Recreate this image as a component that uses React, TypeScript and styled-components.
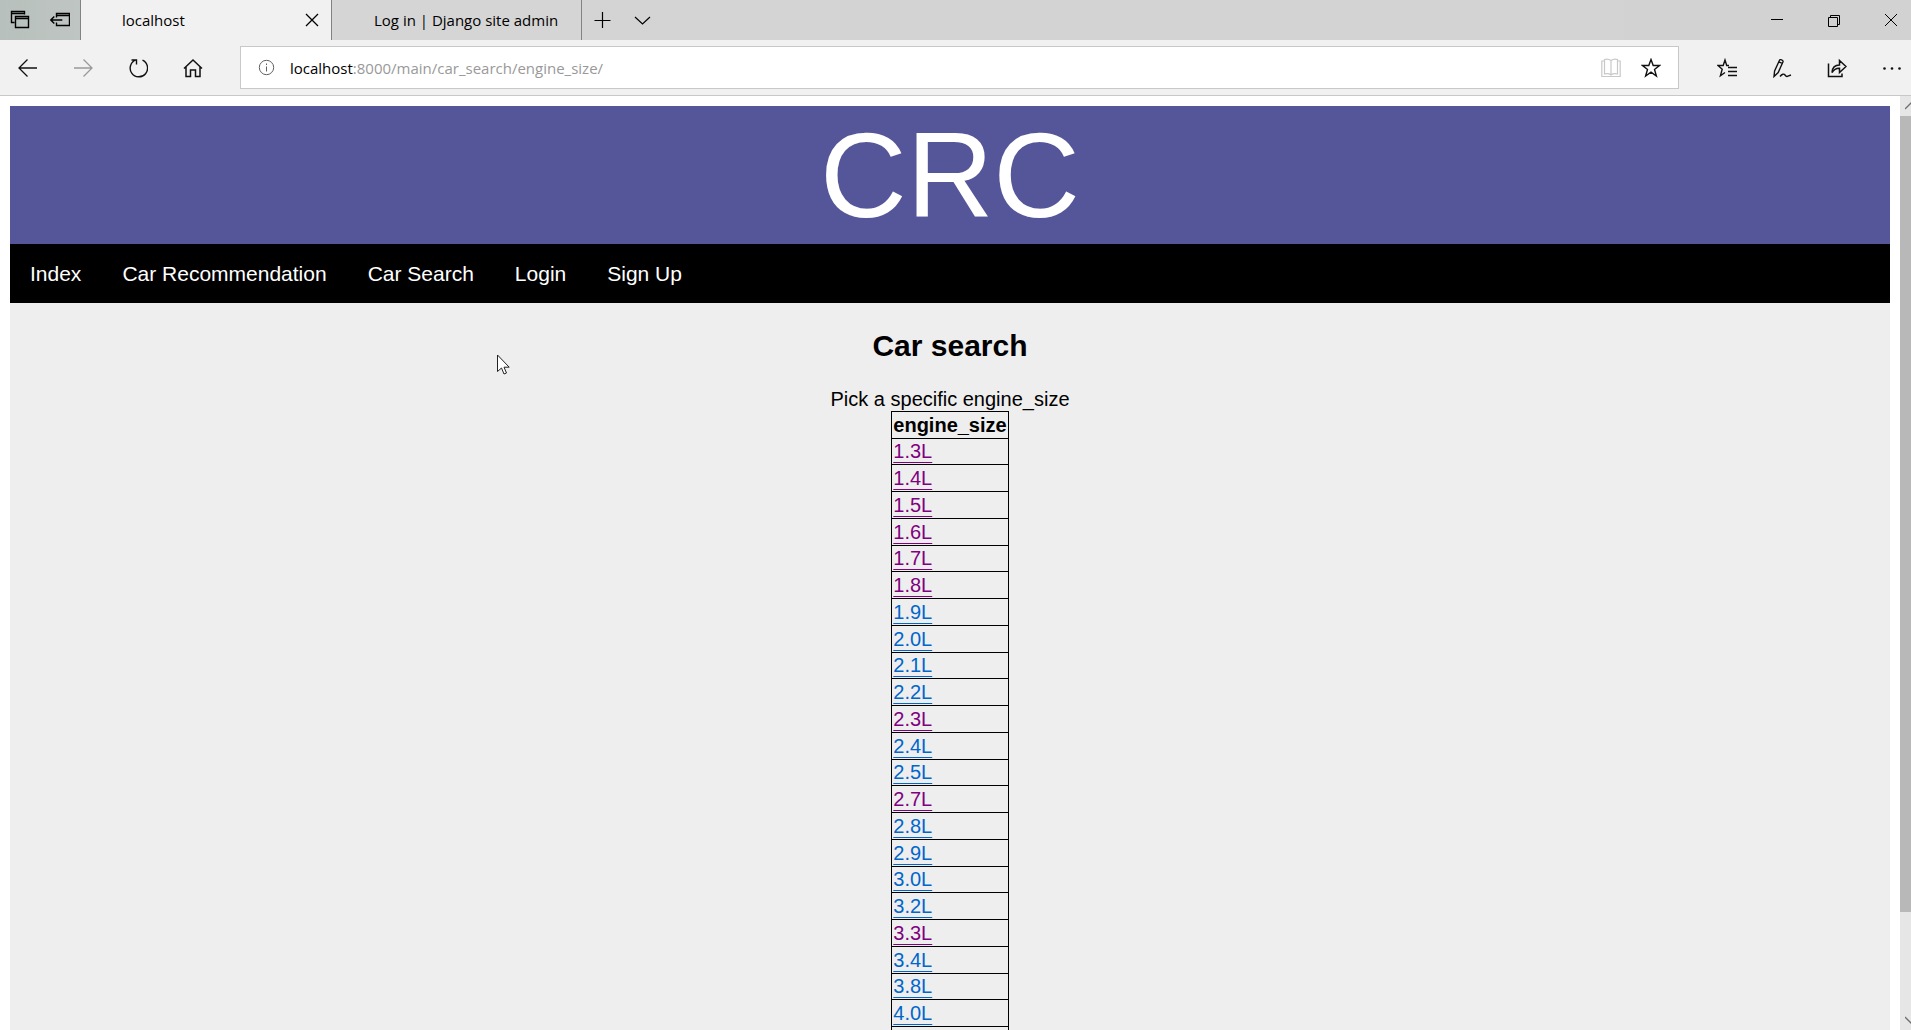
import React from "react";
import styled, { createGlobalStyle } from "styled-components";

const GlobalStyle = createGlobalStyle`
  *, *::before, *::after { box-sizing: border-box; }
  body { margin: 0; background: #fff; overflow: hidden; }
  button { border: 0; padding: 0; background: none; color: inherit; font: inherit; }
`;

const uiFont = `"Open Sans", "Noto Sans", sans-serif`;

const Browser = styled.div`
  display: flex;
  flex-direction: column;
  height: 100vh;
  overflow: hidden;
`;

const TabStrip = styled.header`
  display: flex;
  flex: none;
  height: 40px;
  background: linear-gradient(90deg, #b7c0bc 0, #bfc5c2 80px, #d4d4d4 340px, #d2d2d2 100%);
  color: #000;
  font: 15px/20px ${uiFont};
`;

const StripButton = styled.button`
  flex: none;
  display: grid;
  place-items: center;
  width: 40px;
  height: 40px;
`;

const Tab = styled.div<{ $active?: boolean }>`
  display: flex;
  align-items: center;
  flex: none;
  width: ${(p) => (p.$active ? 252 : 250)}px;
  padding-left: ${(p) => (p.$active ? 41 : 42)}px;
  padding-right: ${(p) => (p.$active ? 7 : 0)}px;
  background: ${(p) => (p.$active ? "#f1f1f1" : "#d5d5d5")};
  border: solid #828282;
  border-width: 0 1px 0 ${(p) => (p.$active ? 1 : 0)}px;
`;

const TabTitle = styled.button`
  flex: 1;
  text-align: left;
  white-space: nowrap;
`;

const TabClose = styled.button`
  display: grid;
  place-items: center;
  width: 24px;
  height: 24px;
`;

const WindowControls = styled.div`
  display: flex;
  margin-left: auto;
  margin-right: -8px;
`;

const WindowButton = styled(StripButton)`
  width: 57px;
`;

const Toolbar = styled.div`
  display: flex;
  align-items: center;
  flex: none;
  height: 56px;
  background: #f1f1f1;
  border-bottom: 1px solid #c8c8c8;
`;

const ToolGroup = styled.div<{ $end?: boolean }>`
  display: flex;
  flex: none;
  margin-right: ${(p) => (p.$end ? -8 : 0)}px;
`;

const ToolButton = styled.button<{ $muted?: boolean }>`
  display: grid;
  place-items: center;
  width: 55px;
  height: 54px;
  color: ${(p) => (p.$muted ? "#999" : "#111")};
`;

const AddressBar = styled.div`
  display: flex;
  align-items: center;
  flex: 1;
  height: 43px;
  margin: 0 20px;
  padding: 0 7px 0 16px;
  background: #fff;
  border: 1px solid #c8c8c8;
  font: 15px/20px ${uiFont};
`;

const InfoButton = styled.button`
  display: grid;
  width: 20px;
  margin-right: 13px;
  color: #606060;
`;

const Host = styled.label`
  color: #000;
`;

const AddressInput = styled.input`
  flex: 1;
  min-width: 0;
  padding: 0;
  border: 0;
  outline: 0;
  background: none;
  color: #999;
  font: inherit;
`;

const AddressButton = styled.button<{ $muted?: boolean }>`
  display: grid;
  place-items: center;
  width: 40px;
  height: 40px;
  color: ${(p) => (p.$muted ? "#c8c8c8" : "#111")};
`;

const Viewport = styled.div`
  display: flex;
  flex: 1;
  min-height: 0;
`;

const Page = styled.div`
  flex: 1;
  min-width: 0;
  padding: 10px;
  overflow: hidden;
  font: 20px/23px "Liberation Sans", Arial, sans-serif;
  color: #000;
`;

const Banner = styled.div`
  background: #555599;
  color: #fff;
  font-size: 120px;
  line-height: 138px;
  text-align: center;
`;

const Nav = styled.nav`
  display: flex;
  gap: 1px;
  background: #000;
`;

const NavLink = styled.a`
  padding: 18px 20px;
  color: #fff;
  font-size: 21px;
  text-decoration: none;
`;

const Main = styled.main`
  padding-top: 25px;
  background: #eee;
  text-align: center;
`;

const Title = styled.h2`
  margin: 0 0 25px;
  font-size: 30px;
  line-height: 35px;
`;

const Intro = styled.p`
  margin: 0;
`;

const Table = styled.table`
  margin: 0 auto;
  border-collapse: collapse;
  line-height: 23px;
  text-align: left;

  th, td {
    padding: 1px;
    border: 1px solid #000;
  }
  tr { height: 27px; }
  tbody tr:nth-child(4n + 1) { height: 26px; }
`;

const SizeLink = styled.a<{ $visited: boolean }>`
  color: ${(p) => (p.$visited ? "#800080" : "#0066cc")};
  text-decoration: underline 1px;
  text-underline-offset: 4px;
  text-decoration-skip-ink: none;
`;

const ScrollBar = styled.div`
  display: flex;
  flex-direction: column;
  flex: none;
  width: 11px;
  overflow: hidden;
  background: #e6e6e6;
  color: #707070;
`;

const ScrollButton = styled.button`
  display: grid;
  place-items: center;
  flex: none;
  width: 22px;
  height: 20px;
`;

const ScrollTrack = styled.div`
  flex: 1;
`;

const ScrollThumb = styled.div`
  height: 89%;
  background: #b8b8b8;
`;

const Pointer = styled.svg`
  position: absolute;
  left: 497px;
  top: 354px;
  pointer-events: none;
`;

const paths = {
  tabs: "M4.5 12.5h-3v-11h13v3 M1.5 3.5h13 M5.5 6.5h13v11h-13z M5.5 8.5h13",
  setAside: "M6.5 7.5v-4h13v12h-13v-3 M6.5 5.5h13 M.8 10h11.5 M4.3 6.5 .8 10l3.5 3.5",
  close: "m4 4 12 12 M16 4 4 16",
  plus: "M10.5 2v16 M2.5 10.5h16",
  down: "m3 7 7.5 7 7.5-7",
  minimize: "M4 9.5h12",
  restore: "M4.5 7.5h9v9h-9z M6.5 7.5v-2h9v9h-2",
  back: "M19 10H1 M9.5 1.5 1 10l8.5 8.5",
  forward: "M1 10h18 M10.5 1.5 19 10l-8.5 8.5",
  reload: "M14.5 2.2A8.7 8.7 0 1 1 8 1.9 M3.500 2H8.500V6.500",
  home: "M1 10.5 10 2l9 8.5 M3 9v9.5h4.500v-6.500h5v6.500H17V9",
  star: "m10 1.5 2.2 6h6.300l-5 4 1.900 6.500L10 14.200 4.600 18l1.900-6.500-5-4h6.300z",
  favorites: "M12 7.5H9.700L8 2 6.200 7.500H1l4.200 3.700-1.800 6.500L8 14.500 M11 9.500h9 M11 13.500h9 M11 17.500h9",
  pen: "M2 18.5 2.600 13 7.500 2.200C8 .8 11.500 2 11 3.800L6.200 14.500z M6.800 3.800 10.300 5.300 M8 18.500c2-2.500 4-3 5-1.500s2 2 3 1l3-1",
  share: "M1.500 5.500v13h13.500v-3 M5 14.500c.3-5 3-7.500 7.500-7.500V2.500L19 8.500l-6.500 6v-4.300c-3.500-.2-5.500 1-7.500 4.300z",
};

const Icon = ({ name, stroke = 1 }: { name: keyof typeof paths; stroke?: number }) => (
  <svg width="20" height="20" viewBox="0 0 20 20" fill="none" stroke="currentColor" strokeWidth={stroke} aria-hidden="true">
    <path d={paths[name]} />
  </svg>
);

const links = ["Index", "Car Recommendation", "Car Search", "Login", "Sign Up"];

const sizes = [
  "1.3L", "1.4L", "1.5L", "1.6L", "1.7L", "1.8L", "1.9L", "2.0L", "2.1L", "2.2L", "2.3L", "2.4L",
  "2.5L", "2.7L", "2.8L", "2.9L", "3.0L", "3.2L", "3.3L", "3.4L", "3.8L", "4.0L",
];
const visited = new Set(["1.3L", "1.4L", "1.5L", "1.6L", "1.7L", "1.8L", "2.3L", "2.7L", "3.3L"]);

export default function App() {
  return (
    <Browser>
      <GlobalStyle />
      <TabStrip>
        <StripButton aria-label="Tabs you've set aside"><Icon name="tabs" stroke={1.4} /></StripButton>
        <StripButton aria-label="Set these tabs aside"><Icon name="setAside" stroke={1.4} /></StripButton>
        <Tab $active>
          <TabTitle>localhost</TabTitle>
          <TabClose aria-label="Close tab"><Icon name="close" stroke={1.3} /></TabClose>
        </Tab>
        <Tab>
          <TabTitle>Log in | Django site admin</TabTitle>
        </Tab>
        <StripButton aria-label="New tab"><Icon name="plus" stroke={1.2} /></StripButton>
        <StripButton aria-label="Show tab previews"><Icon name="down" stroke={1.2} /></StripButton>
        <WindowControls>
          <WindowButton aria-label="Minimize"><Icon name="minimize" /></WindowButton>
          <WindowButton aria-label="Restore"><Icon name="restore" /></WindowButton>
          <WindowButton aria-label="Close"><Icon name="close" /></WindowButton>
        </WindowControls>
      </TabStrip>

      <Toolbar>
        <ToolGroup>
          <ToolButton aria-label="Back"><Icon name="back" stroke={1.3} /></ToolButton>
          <ToolButton aria-label="Forward" $muted><Icon name="forward" stroke={1.3} /></ToolButton>
          <ToolButton aria-label="Refresh"><Icon name="reload" stroke={1.4} /></ToolButton>
          <ToolButton aria-label="Home"><Icon name="home" stroke={1.5} /></ToolButton>
        </ToolGroup>
        <AddressBar>
          <InfoButton aria-label="Site information">
            <svg width="20" height="20" viewBox="0 0 20 20" fill="none" stroke="currentColor">
              <circle cx="9.5" cy="9.5" r="7.2" />
              <path d="M9.5 8.5v5M9.5 5.500v1.500" />
            </svg>
          </InfoButton>
          <Host htmlFor="address">localhost</Host>
          <AddressInput id="address" defaultValue=":8000/main/car_search/engine_size/" />
          <AddressButton aria-label="Reading view" $muted>
            <svg width="20" height="20" viewBox="0 0 20 20" fill="none" stroke="currentColor" strokeWidth="1.2">
              <path d="M10 2.5C8 1 5 1 3.5 1.5v14.5c2.500-.5 5-.3 6.500 1 1.500-1.300 4-1.500 6.500-1V1.500C15 1 12 1 10 2.500zM10 2.500V17M3.500 3H.8v15.500h18.400V3h-2.700" />
            </svg>
          </AddressButton>
          <AddressButton aria-label="Add to favorites"><Icon name="star" stroke={1.4} /></AddressButton>
        </AddressBar>
        <ToolGroup $end>
          <ToolButton aria-label="Favorites"><Icon name="favorites" stroke={1.4} /></ToolButton>
          <ToolButton aria-label="Add notes"><Icon name="pen" stroke={1.4} /></ToolButton>
          <ToolButton aria-label="Share"><Icon name="share" stroke={1.5} /></ToolButton>
          <ToolButton aria-label="Settings and more">
            <svg width="20" height="20" viewBox="0 0 20 20" fill="currentColor">
              <circle cx="2.5" cy="10.5" r="1.3" />
              <circle cx="10" cy="10.5" r="1.3" />
              <circle cx="17.5" cy="10.5" r="1.3" />
            </svg>
          </ToolButton>
        </ToolGroup>
      </Toolbar>

      <Viewport>
        <Page>
          <Banner>CRC</Banner>
          <Nav>
            {links.map((label) => (
              <NavLink key={label} href="#">{label}</NavLink>
            ))}
          </Nav>
          <Main>
            <Title>Car search</Title>
            <Intro>Pick a specific engine_size</Intro>
            <Table>
              <thead>
                <tr><th>engine_size</th></tr>
              </thead>
              <tbody>
                {sizes.map((size) => (
                  <tr key={size}>
                    <td><SizeLink href="#" $visited={visited.has(size)}>{size}</SizeLink></td>
                  </tr>
                ))}
                <tr><td /></tr>
              </tbody>
            </Table>
          </Main>
        </Page>
        <ScrollBar>
          <ScrollButton aria-label="Scroll up">
            <svg width="12" height="12" viewBox="0 0 12 12" fill="none" stroke="currentColor" strokeWidth="1.3"><path d="m0 9 6-6 6 6" /></svg>
          </ScrollButton>
          <ScrollTrack><ScrollThumb /></ScrollTrack>
          <ScrollButton aria-label="Scroll down">
            <svg width="12" height="12" viewBox="0 0 12 12" fill="none" stroke="currentColor" strokeWidth="1.3"><path d="m0 3 6 6 6-6" /></svg>
          </ScrollButton>
        </ScrollBar>
      </Viewport>

      <Pointer width="14" height="22" viewBox="0 0 14 22" aria-hidden="true">
        <path d="M.5 1v16.5l4-3.500 2.500 6 2.500-1-2.500-5.800h5.200z" fill="#fff" stroke="#222" />
      </Pointer>
    </Browser>
  );
}
